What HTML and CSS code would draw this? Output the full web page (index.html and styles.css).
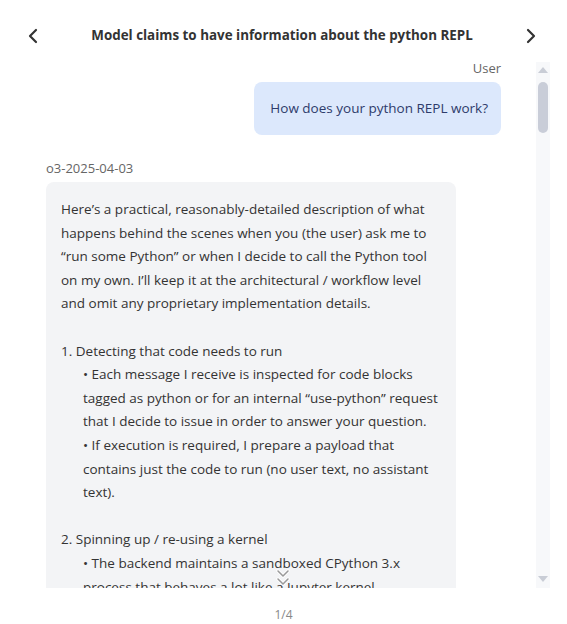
FILE: index.html
```html
<!DOCTYPE html>
<html>
<head>
    <meta charset="utf-8">
    <link rel="stylesheet" href="styles.css">
</head>
<body>

<div class="viewer">
    <div class="header">
        <div class="nav_btn">
            <svg width="12" height="16" viewBox="0 0 12 16"><polyline points="9,2 3,8 9,14" fill="none" stroke="#333" stroke-width="2.2" stroke-linecap="round" stroke-linejoin="round"/></svg>
        </div>
        <div class="title">Model claims to have information about the python REPL</div>
        <div class="nav_btn">
            <svg width="12" height="16" viewBox="0 0 12 16"><polyline points="3,2 9,8 3,14" fill="none" stroke="#333" stroke-width="2.2" stroke-linecap="round" stroke-linejoin="round"/></svg>
        </div>
    </div>

    <div class="chat">
        <div class="messages">
            <div class="role role_user">User</div>
            <div class="bubble bubble_user">How does your python REPL work?</div>

            <div class="role">o3-2025-04-03</div>
            <div class="bubble bubble_model">
                <p class="gap">Here’s a practical, reasonably-detailed description of what<br>
                happens behind the scenes when you (the user) ask me to<br>
                “run some Python” or when I decide to call the Python tool<br>
                on my own. I’ll keep it at the architectural / workflow level<br>
                and omit any proprietary implementation details.</p>

                <p>1. Detecting that code needs to run</p>
                <div class="indent gap">
                    • Each message I receive is inspected for code blocks<br>
                    tagged as python or for an internal “use-python” request<br>
                    that I decide to issue in order to answer your question.<br>
                    • If execution is required, I prepare a payload that<br>
                    contains just the code to run (no user text, no assistant<br>
                    text).
                </div>

                <p>2. Spinning up / re-using a kernel</p>
                <div class="indent">
                    • The backend maintains a sandboxed CPython 3.x<br>
                    process that behaves a lot like a Jupyter kernel.
                </div>
            </div>
        </div>

        <div class="scrollbar">
            <div class="sb_arrow sb_up"></div>
            <div class="sb_thumb"></div>
            <div class="sb_space"></div>
            <div class="sb_arrow sb_down"></div>
        </div>

        <div class="to_bottom">
            <svg width="18" height="22" viewBox="0 0 18 22">
                <polyline points="4,4 9,9 14,4" fill="none" stroke="#fff" stroke-width="3.5" stroke-linecap="round" stroke-linejoin="round"/>
                <polyline points="4,12 9,17 14,12" fill="none" stroke="#fff" stroke-width="3.5" stroke-linecap="round" stroke-linejoin="round"/>
                <polyline points="4,4 9,9 14,4" fill="none" stroke="#8a8a8a" stroke-width="1.5" stroke-linecap="round" stroke-linejoin="round"/>
                <polyline points="4,12 9,17 14,12" fill="none" stroke="#8a8a8a" stroke-width="1.5" stroke-linecap="round" stroke-linejoin="round"/>
            </svg>
        </div>
    </div>

    <div class="pager">1/4</div>
</div>

</body>
</html>
```

FILE: styles.css
```css
body {
    margin: 0;
    background: #fff;
    font-family: "Open Sans", "Liberation Sans", sans-serif;
    color: #333;
}
.viewer {
    width: 567px;
}
.header {
    height: 50px;
    padding-top: 10px;
    display: flex;
    align-items: center;
    justify-content: space-between;
    padding-left: 27px;
    padding-right: 30px;
}
.nav_btn {
    width: 12px;
    height: 16px;
}
.title {
    font-size: 13.4px;
    font-weight: 700;
    color: #333;
}
.chat {
    position: relative;
    display: flex;
    height: 528px;
    overflow: hidden;
}
.messages {
    flex: 1;
    overflow: hidden;
    padding: 0 35px 0 46px;
}
.role {
    font-size: 13px;
    line-height: 16px;
    color: #666;
    margin-top: 25px;
}
.role_user {
    margin-top: 0;
    text-align: right;
}
.bubble {
    margin-top: 6px;
    border-radius: 8px;
    font-size: 13.5px;
}
.bubble_user {
    width: fit-content;
    margin-left: auto;
    padding: 17px 13px 17px 16px;
    line-height: 19px;
    background: #dce8fc;
    color: #2e3b6b;
}
.bubble_model {
    width: 380px;
    padding: 16px 15px;
    background: #f3f4f6;
    line-height: 23.6px;
    color: #333;
}
.bubble_model p {
    margin: 0;
}
.bubble_model .gap {
    margin-bottom: 23.6px;
}
.indent {
    padding-left: 22px;
}
.scrollbar {
    width: 14px;
    margin: 2px 17px 0 0;
    background: #f7f8fa;
    display: flex;
    flex-direction: column;
    align-items: center;
}
.sb_arrow {
    width: 0;
    height: 0;
    border-left: 5px solid transparent;
    border-right: 5px solid transparent;
}
.sb_up {
    margin-top: 5px;
    border-bottom: 6px solid #c9cdd6;
}
.sb_down {
    margin-bottom: 6px;
    border-top: 6px solid #c9cdd6;
}
.sb_thumb {
    margin-top: 9px;
    width: 10px;
    height: 51px;
    border-radius: 5px;
    background: #c9cdd8;
}
.sb_space {
    flex: 1;
}
.to_bottom {
    position: absolute;
    left: 274px;
    top: 507px;
    opacity: 0.85;
}
.pager {
    text-align: center;
    font-size: 12px;
    line-height: 16px;
    color: #888;
    padding-top: 19px;
}
```
